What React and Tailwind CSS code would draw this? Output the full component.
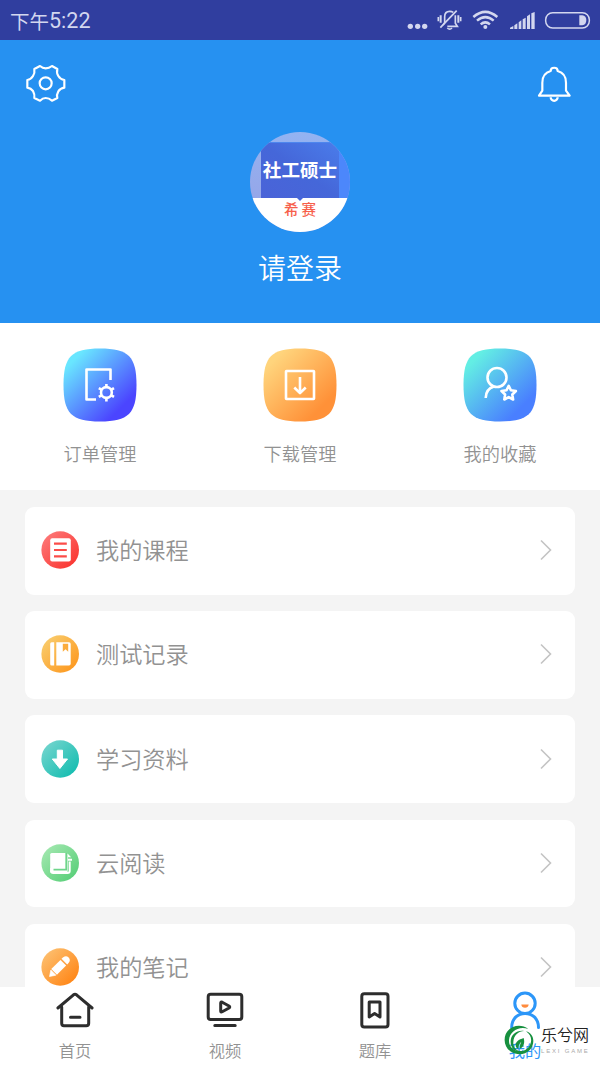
import React from 'react';

const StatusBar = () => {
  return (
    <div className="h-10 bg-[#303e9f] flex items-center justify-between pl-[10px] pr-[9px] text-[#d3d7ef]">
      <div className="flex items-center pt-[2px]">
        <span className="text-[19.5px] leading-none">下午</span>
        <span className="font-[Roboto] text-[21.5px] leading-none">5:22</span>
      </div>
      <div className="flex">
        <svg className="w-6 h-10 mr-[6px]" viewBox="18 0 72 120" fill="currentColor">
          <circle cx="31" cy="79" r="8" />
          <circle cx="53" cy="79" r="8" />
          <circle cx="74" cy="79" r="8" />
        </svg>
        {/* Silencio */}
        <svg className="w-[27px] h-10 mr-2" viewBox="108 0 81 120" fill="none" stroke="currentColor" strokeWidth="5">
          <path d="M134 68V50C134 38 141 34 149 34C153 34 157 35 160 37M166 46V70L172 79H142M134 68L129 75" />
          <path d="M121 83L170 32" />
          <path d="M142 84Q149 91 156 84" strokeWidth="5" />
          <path d="M122 46V68M175 46V68" strokeWidth="6" />
          <path d="M115 51V64M182 51V64" strokeWidth="5" />
        </svg>
        <svg className="w-[29px] h-10 mr-[9px]" viewBox="213 0 87 120" fill="none" stroke="currentColor" strokeWidth="7.5">
          <path d="M220 51Q256 20 292 51" />
          <path d="M231 62Q256 41 281 62" />
          <path d="M242 73Q256 61 270 73" />
          <circle cx="256" cy="81" r="6" fill="currentColor" stroke="none" />
        </svg>
        <svg className="w-[27px] h-10 mr-2" viewBox="327 0 81 120" fill="currentColor">
          <path d="M330 87V83L340 78V87ZM343 87V76L352 70V87ZM356 87V67L364 61V87ZM368 87V58L377 53V87ZM381 87V49L390 43V87ZM394 87V40L404 36V87Z" />
        </svg>
        <svg className="w-[47px] h-10" viewBox="432 0 141 120" fill="none" stroke="currentColor" strokeWidth="4.5">
          <rect x="437" y="38" width="131" height="46" rx="21" />
          <path d="M538 46H547Q559 48 559 60Q559 74 547 76H538Z" fill="currentColor" stroke="none" />
        </svg>
      </div>
    </div>
  );
};

const Header = () => {
  return (
    <div className="h-[283px] bg-[#2691f1] text-white">
      <div className="flex justify-between pl-[26px] pr-[28px] pt-[24px] h-[92px]">
        <svg className="w-10 h-[38px]" viewBox="0 0 120 114" fill="none" stroke="currentColor" strokeWidth="6.5" strokeLinejoin="round">
          <path d="M42 6Q50 13 59 13Q69 13 78 6L94 15Q91 27 97 36Q103 46 115 48V71Q103 73 97 82Q91 92 94 102L78 110Q69 102 59 102Q50 102 42 110L25 102Q27 92 21 81Q15 73 4 71V48Q15 46 21 36Q27 27 25 15Z" />
          <circle cx="59" cy="58" r="18" />
        </svg>
        <svg className="w-[35px] h-[38px] mt-[2px]" viewBox="0 0 105 114" fill="none" stroke="currentColor" strokeWidth="6.5" strokeLinejoin="round">
          <path d="M6 89L16 74V50C16 32 26 19 41 15C41 2 62 2 62 15C77 19 87 32 87 50V74L98 89Z" />
          <path d="M41 94A10.500 10.500 0 0 0 62 94" />
        </svg>
      </div>
      <div className="flex flex-col items-center">
        <div className="w-[100px] h-[100px] rounded-full overflow-hidden bg-linear-to-b from-[#93b3f2] to-[#96a0e4] flex flex-col">
          <div className="mt-[10px] h-[56px] flex shrink-0">
            <div className="w-[11px]" />
            <div className="w-[78px] bg-linear-to-tr from-[#4a63d8] via-[#4567d9] to-[#4a7cea] border-t border-[#4d86ee] flex justify-center items-center pb-[3px]">
              <span className="text-[18.6px] leading-none font-bold whitespace-nowrap">社工硕士</span>
            </div>
            <div className="w-[11px] bg-[#4c87fb]" />
          </div>
          <div className="h-[34px] bg-white flex flex-col items-center">
            <svg className="w-[6px] h-[3px]" viewBox="0 0 6 3">
              <path d="M0 0H6L3 3Z" fill="#4567d9" />
            </svg>
            <span className="mt-[1px] text-[14.5px] leading-none font-medium text-[#f75f4b] tracking-[3px] pl-[3px]">希赛</span>
          </div>
        </div>
        <span className="mt-[15px] text-[28px] leading-[40px] font-[350]">请登录</span>
      </div>
    </div>
  );
};

const SQUIRCLE = 'M0 36.500C0 8 8 0 36.500 0S73 8 73 36.500S65 73 36.500 73S0 65 0 36.500Z';

const Shortcut = ({ id, label, from, to, children }) => {
  return (
    <div className="w-[200px] flex flex-col items-center">
      <svg className="w-[74px] h-[74px]" viewBox="0 0 74 74" fill="none">
        <defs>
          <linearGradient id={id} x1="0.15" y1="0.15" x2="0.8" y2="0.8">
            <stop offset="0" stopColor={from} />
            <stop offset="1" stopColor={to} />
          </linearGradient>
        </defs>
        <g transform="translate(0.500 0.500)">
          <path d={SQUIRCLE} fill={`url(#${id})`} />
          <g stroke="#fff" strokeWidth="2.600" strokeLinejoin="round">{children}</g>
        </g>
      </svg>
      <span className="mt-[19px] text-[18.2px] leading-6 font-[350] text-[#929292]">{label}</span>
    </div>
  );
};

const Shortcuts = () => {
  return (
    <div className="h-[167px] bg-white pt-[25px] flex">
      <Shortcut id="pedidos" label="订单管理" from="#69e6ff" to="#4b45ff">
        <path d="M47.500 32V21.500H23.500V51.500H33" transform="translate(-0.500 -0.500)" />
        <circle cx="42.900" cy="44" r="5.400" />
        <path d="M42.900 38.500V35.500M42.900 49.800V53M38 41.200L35.300 39.600M47.800 41.200L50.500 39.600M38 46.800L35.300 48.400M47.800 46.800L50.500 48.400" />
      </Shortcut>
      <Shortcut id="descargas" label="下载管理" from="#ffd47c" to="#ff9138">
        <rect x="22.500" y="22.500" width="28" height="28" rx="0.500" />
        <path d="M36.500 28.500V44.500M30.800 39L36.500 44.700L42.200 39" />
      </Shortcut>
      <Shortcut id="favoritos" label="我的收藏" from="#63eee4" to="#497fff">
        <circle cx="33.500" cy="29" r="9.500" />
        <path d="M22.200 49.500C22.200 43.500 25.500 39.500 30.500 38" />
        <path d="M45.200 37.300L47.400 41.800L52.400 42.500L48.800 46L49.600 51L45.200 48.600L40.800 51L41.600 46L38 42.500L43 41.800Z" />
      </Shortcut>
    </div>
  );
};

const MenuItem = ({ id, label, from, to, children }) => {
  return (
    <div className="h-[87.5px] shrink-0 bg-white rounded-[9px] flex items-center pl-4 pr-[23px] pb-[1px]">
      <svg className="w-[38px] h-[38px]" viewBox="0 0 38 38" fill="none">
        <defs>
          <linearGradient id={id} x1="0.1" y1="0.1" x2="0.9" y2="0.9">
            <stop offset="0" stopColor={from} />
            <stop offset="1" stopColor={to} />
          </linearGradient>
        </defs>
        <circle cx="19.2" cy="19" r="18.800" fill={`url(#${id})`} />
        {children}
      </svg>
      <span className="ml-[17px] mb-[2px] grow text-[23.2px] leading-8 font-[350] text-[#929292]">{label}</span>
      <svg className="w-[13px] h-[22px]" viewBox="0 0 13 22" fill="none" stroke="#c4c4c4" strokeWidth="1.6">
        <path d="M2 1.500L11.500 11L2 20.500" />
      </svg>
    </div>
  );
};

const Menu = () => {
  return (
    <div className="h-[497px] overflow-hidden bg-[#f4f4f4] px-[25px] pt-[17px] flex flex-col gap-[16.7px]">
      <MenuItem id="cursos" label="我的课程" from="#fd7777" to="#fa3530">
        <rect x="9.200" y="7.200" width="20.600" height="23.300" rx="2" fill="#fff" />
        <path d="M13 12.600H25.800M13 19H25.800M13 25.300H25.800" stroke="#fb4d49" strokeWidth="2.200" />
      </MenuItem>
      <MenuItem id="tests" label="测试记录" from="#f9cc6c" to="#fd981f">
        <path d="M10.700 7.300H13.200V30.400H10.700Q9.200 30.400 9.200 28.900V8.800Q9.200 7.300 10.700 7.300Z" fill="#fff" />
        <path d="M15.300 7.300H28Q29.700 7.300 29.700 9V28.700Q29.700 30.400 28 30.400H15.300Z" fill="#fff" />
        <path d="M21.800 8.800H27.200V16.700L24.500 14.300L21.800 16.700Z" fill="#fbac3c" />
      </MenuItem>
      <MenuItem id="material" label="学习资料" from="#71d4cd" to="#14bdb0">
        <path d="M16.300 10.200H21.500V19H26.500L18.900 28.500L11.300 19H16.300Z" fill="#fff" stroke="#fff" strokeWidth="1" strokeLinejoin="round" />
      </MenuItem>
      <MenuItem id="lectura" label="云阅读" from="#a1e7ae" to="#59cf79">
        <rect x="9.200" y="9" width="17.400" height="20" rx="1.500" fill="#fff" />
        <path d="M10.200 24V27Q10.200 29 12.200 29H26.500Q28.700 29 28.700 27V17.500" stroke="#fff" strokeWidth="2" />
        <path d="M12.500 25.600H25.200V9" stroke="#6ed58a" strokeWidth="1.700" />
        <path d="M27 10L30.200 13.200H27ZM27 14.800H31V16.800H27Z" fill="#fff" />
      </MenuItem>
      <MenuItem id="notas" label="我的笔记" from="#fdbf6f" to="#ff8515">
        <g transform="translate(8.500 28.500) rotate(-45)" fill="#fff">
          <path d="M0 0L5.500 -3.600V3.600Z" stroke="#fff" strokeWidth="0.600" strokeLinejoin="round" />
          <rect x="6.500" y="-4" width="13" height="8" />
          <path d="M21 -4H23Q27 -3.500 27 0T23 4H21Z" />
        </g>
      </MenuItem>
    </div>
  );
};

const Tab = ({ label, active, children }) => {
  return (
    <div className="w-[150px] flex flex-col items-center pt-[3px]">
      <svg
        className={active ? 'w-10 h-10 text-[#2c96f8]' : 'w-10 h-10 text-[#2d2d2d]'}
        viewBox="0 0 40 40"
        fill="none"
        stroke="currentColor"
        strokeWidth="3"
        strokeLinejoin="round"
        strokeLinecap="round"
      >
        {children}
      </svg>
      <span className={active ? 'mt-[10px] text-[16.3px] leading-5 text-[#2c96f8]' : 'mt-[10px] text-[16.3px] leading-5 font-[350] text-[#929292]'}>
        {label}
      </span>
    </div>
  );
};

const TabBar = () => {
  return (
    <div className="h-20 bg-white flex">
      <Tab label="首页">
        <path d="M2.900 18L18.500 4.800Q20 3.700 21.500 4.800L37.100 18" />
        <path d="M6.700 17V33.300Q6.700 35.800 9 35.800H31.200Q33.700 35.800 33.700 33.300V17M15.500 27.300H25" />
      </Tab>
      <Tab label="视频">
        <rect x="3.200" y="4.200" width="33.600" height="25.400" rx="2.500" />
        <path d="M9.800 35.500H30.200M15.700 13Q15.700 11.500 17.200 12.200L24 16Q25.500 17 24 18L17.200 21.800Q15.700 22.600 15.700 21Z" />
      </Tab>
      <Tab label="题库">
        <rect x="6.800" y="3.700" width="26.200" height="33.400" rx="2.500" />
        <path d="M14.200 12H25V27L19.600 23.500L14.200 27Z" />
      </Tab>
      <Tab label="我的" active>
        <circle cx="20" cy="13.300" r="10.200" />
        <path d="M6.700 37.500C6.700 18.700 33.500 18.700 33.500 37.500" />
        <path d="M16.300 14.500H23.700Q23.200 17.800 20 17.800T16.300 14.500Z" fill="#ff8b3d" stroke="none" />
      </Tab>
    </div>
  );
};

// Marca de agua sobre la barra inferior
const Watermark = () => {
  return (
    <div className="absolute right-[10px] bottom-[12px] flex items-center gap-[7px]">
      <svg className="w-[30px] h-[30px]" viewBox="0 0 90 90" fill="#17903f">
        <path d="M73 12C50 -6 16 2 5 28C-7 60 17 88 46 88C72 88 88 68 88 48C88 34 79 22 66 19C78 28 83 38 81 50C78 68 63 79 47 78C27 77 14 64 15 45C17 21 43 2 73 12Z" />
        <path d="M20 50C20 28 39 15 60 18C44 18 29 30 28 51C27 65 34 74 45 78C30 78 20 67 20 50Z" />
        <path d="M59 39C44 44 34 50 35 62C36 67 39 70 43 71C42 63 46 55 52 50C49 57 46 64 48 71C60 66 63 52 59 39Z" />
      </svg>
      <div className="w-[49px] flex flex-col">
        <span className="text-[16px] leading-[18px] font-[350] text-[#222] whitespace-nowrap">乐兮网</span>
        <span className="mt-[4px] font-['Liberation_Sans'] text-[6px] leading-[8px] tracking-[1.8px] text-[#aaa] whitespace-nowrap">LEXI GAME</span>
      </div>
    </div>
  );
};

const App = () => {
  return (
    <div className="relative w-[600px] h-[1067px] overflow-hidden bg-white font-['Noto_Sans_CJK_SC',sans-serif]">
      <StatusBar />
      <Header />
      <Shortcuts />
      <Menu />
      <TabBar />
      <Watermark />
    </div>
  );
};

export default App;
